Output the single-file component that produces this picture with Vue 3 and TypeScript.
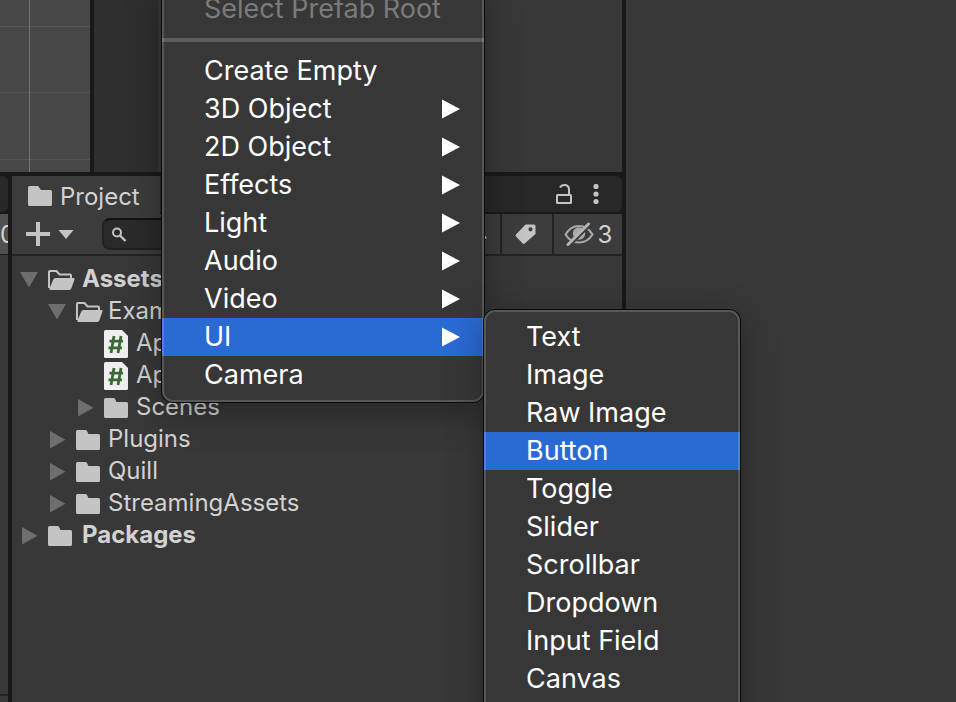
<script setup lang="ts">
import { ref } from 'vue'

interface MenuEntry {
  label: string
  submenu?: boolean
}

interface TreeNode {
  label: string
  level: number
  icon: 'open' | 'folder' | 'script'
  arrow: 'down' | 'right' | 'none'
  bold?: boolean
}

const menuEntries: MenuEntry[] = [
  { label: 'Create Empty' },
  { label: '3D Object', submenu: true },
  { label: '2D Object', submenu: true },
  { label: 'Effects', submenu: true },
  { label: 'Light', submenu: true },
  { label: 'Audio', submenu: true },
  { label: 'Video', submenu: true },
  { label: 'UI', submenu: true },
  { label: 'Camera' },
]

const uiEntries: string[] = [
  'Text', 'Image', 'Raw Image', 'Button', 'Toggle', 'Slider',
  'Scrollbar', 'Dropdown', 'Input Field', 'Canvas',
]

const tree: TreeNode[] = [
  { label: 'Assets', level: 0, icon: 'open', arrow: 'down', bold: true },
  { label: 'Exam', level: 1, icon: 'open', arrow: 'down' },
  { label: 'Ap', level: 2, icon: 'script', arrow: 'none' },
  { label: 'Ap', level: 2, icon: 'script', arrow: 'none' },
  { label: 'Scenes', level: 2, icon: 'folder', arrow: 'right' },
  { label: 'Plugins', level: 1, icon: 'folder', arrow: 'right' },
  { label: 'Quill', level: 1, icon: 'folder', arrow: 'right' },
  { label: 'StreamingAssets', level: 1, icon: 'folder', arrow: 'right' },
  { label: 'Packages', level: 0, icon: 'folder', arrow: 'right', bold: true },
]

const activeEntry = ref('UI')
const activeUiEntry = ref('Button')
const query = ref('')
</script>

<template>
  <div class="editor">
    <div class="workspace">
      <div class="upper">
        <section class="scene" aria-label="Scene">
          <svg class="grid-lines" width="90" height="172" aria-hidden="true">
            <path d="M0 26.500H90M0 92.500H90M0 159.500H90" stroke="#565656" />
            <path d="M29.500 0V172" stroke="#757575" />
          </svg>
        </section>
        <section class="hierarchy" aria-label="Hierarchy">
          <div class="gutter"></div>
          <div class="hierarchy-body"></div>
        </section>
      </div>
      <div class="lower">
        <section class="side" aria-label="Console">
          <div class="side-tabs"></div>
          <div class="side-tools"><span>0</span></div>
          <div class="side-body"></div>
          <div class="side-foot"></div>
        </section>
        <section class="project" aria-label="Project">
          <header class="tabs">
            <button class="tab" type="button">
              <svg width="24" height="20" viewBox="0 0 24 20" aria-hidden="true">
                <path d="M1.500 0H10L13 4H22.500Q24 4 24 5.500V18.500Q24 20 22.500 20H1.500Q0 20 0 18.500V1.500Q0 0 1.500 0Z" fill="#c4c4c4" />
              </svg>
              Project
            </button>
            <div class="tab-rest">
              <button class="icon-button" type="button" aria-label="Lock">
                <svg width="16" height="20" viewBox="0 0 16 20" fill="none" stroke="#c4c4c4" stroke-width="2" aria-hidden="true">
                  <rect x="1" y="11" width="14" height="8" rx="0.500" />
                  <path d="M4 3.500C5 1.600 6.500 1 8.500 1C11.300 1 13 2.800 13 5.500V11" />
                </svg>
              </button>
              <button class="icon-button" type="button" aria-label="More">
                <svg width="6" height="20" viewBox="0 0 6 20" fill="#c4c4c4" aria-hidden="true">
                  <circle cx="3" cy="2.500" r="2.600" /><circle cx="3" cy="10" r="2.600" /><circle cx="3" cy="17.500" r="2.600" />
                </svg>
              </button>
            </div>
          </header>
          <div class="toolbar">
            <button class="add" type="button" aria-label="Add">
              <svg width="48" height="24" viewBox="0 0 48 24" fill="#c4c4c4" aria-hidden="true">
                <path d="M10 0H14V10H24V14H14V24H10V14H0V10H10Z" />
                <path d="M32.500 8H47.500L40 17Z" />
              </svg>
            </button>
            <label class="search">
              <svg width="16" height="16" viewBox="0 0 16 16" fill="none" stroke="#c4c4c4" stroke-width="2" aria-hidden="true">
                <circle cx="5" cy="5.500" r="4" /><path d="M8 8.500L13.500 14" stroke-width="2.400" />
              </svg>
              <input v-model="query" type="text" aria-label="Search">
            </label>
            <button class="tool type" type="button" aria-label="Search by type">
              <svg width="22" height="20" viewBox="0 0 22 20" fill="#c4c4c4" aria-hidden="true">
                <circle cx="5" cy="14" r="4" /><rect x="6" y="0" width="8" height="7" /><path d="M17 7L22 14.500H12Z" />
              </svg>
            </button>
            <button class="tool tag" type="button" aria-label="Search by label">
              <svg width="21" height="21" viewBox="0 0 21 21" aria-hidden="true">
                <path fill="#c4c4c4" fill-rule="evenodd" d="M10.500 0.500H19Q20.500 0.500 20.500 2V10L9.700 19.600Q8.700 20.500 7.700 19.500L1 12.500Q0 11.500 1 10.500ZM15.500 3.200A2.100 2.100 0 1 0 15.500 7.400A2.100 2.100 0 1 0 15.500 3.200Z" />
              </svg>
            </button>
            <button class="tool hidden" type="button">
              <svg width="30" height="24" viewBox="0 0 30 24" fill="none" aria-hidden="true">
                <path d="M1.500 12.500C5 6.500 9.500 4 15 4S25 6.500 28.500 12.500C25 18 20.500 20.500 15 20.500S5 18 1.500 12.500Z" stroke="#a8a8a8" stroke-width="2.200" />
                <circle cx="15" cy="11.500" r="6.200" fill="#a8a8a8" />
                <path d="M5.500 23.500L26.500 2.500" stroke="#3c3c3c" stroke-width="3" />
                <path d="M4 22.500L24.500 2" stroke="#b4b4b4" stroke-width="3" stroke-linecap="round" />
              </svg>
              3
            </button>
          </div>
          <ul class="tree">
            <li v-for="(node, i) in tree" :key="i">
              <button class="node" :class="['level-' + node.level, { bold: node.bold }]" type="button">
                <svg class="arrow" width="18" height="18" viewBox="0 0 18 18" fill="#6e6e6e" aria-hidden="true">
                  <path v-if="node.arrow === 'down'" d="M0 1H18L9 16.500Z" />
                  <path v-else-if="node.arrow === 'right'" d="M2 0V17.500L17.500 8.700Z" />
                </svg>
                <span class="glyph">
                  <svg v-if="node.icon === 'open'" width="27" height="20" viewBox="0 0 27 20" aria-hidden="true">
                    <path d="M1 18V1.700Q1 1 1.700 1H8.500L11.500 4.500H22Q23 4.500 23 5.500V8" fill="none" stroke="#c4c4c4" stroke-width="2" />
                    <path d="M7.500 8H25.500Q27 8 26.500 9.500L23.500 18Q23 20 21 20H2Q1 20 1.500 18.500L5 10Q5.800 8 7.500 8Z" fill="#c4c4c4" />
                  </svg>
                  <svg v-else-if="node.icon === 'folder'" width="24" height="20" viewBox="0 0 24 20" aria-hidden="true">
                    <path d="M1.500 0H9.500Q10.500 0 11 1L12.500 4H22.500Q24 4 24 5.500V18.500Q24 20 22.500 20H1.500Q0 20 0 18.500V1.500Q0 0 1.500 0Z" fill="#c4c4c4" />
                  </svg>
                  <svg v-else width="24" height="28" viewBox="0 0 24 28" aria-hidden="true">
                    <path d="M1.500 0H18L24 6V26.500Q24 28 22.500 28H1.500Q0 28 0 26.500V1.500Q0 0 1.500 0Z" fill="#efefef" />
                    <path d="M10 6L7 23M17 6L14 23M5.500 11.200H19M4.500 17.800H18" stroke="#3a6b35" stroke-width="2.800" fill="none" />
                  </svg>
                </span>
                {{ node.label }}
              </button>
            </li>
          </ul>
        </section>
      </div>
    </div>
    <aside class="inspector"></aside>

    <div class="menu context-menu" role="menu" aria-label="GameObject">
      <button class="item" type="button" role="menuitem" disabled>Select Prefab Root</button>
      <hr>
      <button
        v-for="entry in menuEntries"
        :key="entry.label"
        class="item"
        :class="{ active: entry.label === activeEntry }"
        type="button"
        role="menuitem"
        @click="activeEntry = entry.label"
      >
        {{ entry.label }}
        <svg v-if="entry.submenu" width="18" height="20" viewBox="0 0 18 20" aria-hidden="true">
          <path d="M0 0.500V19.500L18 10Z" fill="#fff" />
        </svg>
      </button>
    </div>

    <div class="menu ui-menu" role="menu" aria-label="UI">
      <button
        v-for="label in uiEntries"
        :key="label"
        class="item"
        :class="{ active: label === activeUiEntry }"
        type="button"
        role="menuitem"
        @click="activeUiEntry = label"
      >
        {{ label }}
      </button>
    </div>
  </div>
</template>

<style>
body {
  margin: 0;
  background: #191919;
}
</style>

<style scoped>
.editor {
  position: relative;
  display: grid;
  grid-template-columns: 622fr 330fr;
  gap: 4px;
  height: 100vh;
  overflow: hidden;
  background: #191919;
  color: #d2d2d2;
  font-family: Inter, "Liberation Sans", sans-serif;
  font-size: 24px;
}

button {
  margin: 0;
  padding: 0;
  border: 0;
  background: none;
  color: inherit;
  font: inherit;
  text-align: left;
  white-space: nowrap;
}

svg {
  display: block;
  flex: none;
}

.workspace {
  display: grid;
  grid-template-rows: 172px 1fr;
  gap: 4px;
  min-width: 0;
}

.inspector {
  background: #383838;
}

.upper {
  display: grid;
  grid-template-columns: 90px 1fr;
  gap: 4px;
}

.scene {
  background: #474747;
}

.hierarchy {
  display: flex;
}

.gutter {
  width: 64px;
  background: #2f2f2f;
}

.hierarchy-body {
  flex: 1;
  background: #383838;
}

.lower {
  display: grid;
  grid-template-columns: 8px 1fr;
  gap: 4px;
  min-height: 0;
}

.side {
  display: flex;
  flex-direction: column;
  overflow: hidden;
}

.side-tabs {
  height: 36px;
  margin-bottom: 2px;
  border-radius: 0 6px 6px 0;
  background: #282828;
}

.side-tools {
  display: flex;
  align-items: center;
  height: 40px;
  background: #505050;
}

.side-body {
  flex: 1;
  margin-top: 1px;
  background: #383838;
}

.side-foot {
  height: 6px;
  border-top: 2px solid #232323;
  background: #383838;
}

.project {
  display: flex;
  flex-direction: column;
  min-width: 0;
  background: #383838;
}

.tabs {
  display: flex;
  height: 38px;
  background: #191919;
}

.tab {
  display: flex;
  align-items: center;
  gap: 8px;
  padding: 2px 20px 0 16px;
  background: #3c3c3c;
}

.tab-rest {
  display: flex;
  flex: 1;
  align-items: center;
  justify-content: flex-end;
  gap: 21px;
  height: 36px;
  padding-right: 23px;
  border-radius: 0 6px 6px 0;
  background: #282828;
}

.toolbar {
  display: flex;
  align-items: center;
  height: 40px;
  border-bottom: 2px solid #232323;
  background: #3c3c3c;
}

.add {
  padding: 0 28px 0 14px;
}

.search {
  display: flex;
  flex: 1;
  align-items: center;
  gap: 8px;
  box-sizing: border-box;
  height: 32px;
  min-width: 0;
  padding: 2px 8px 0;
  border: 2px solid #212121;
  border-top-color: #111;
  border-radius: 8px;
  background: #2a2a2a;
}

.search input {
  flex: 1;
  min-width: 0;
  border: 0;
  outline: 0;
  background: none;
  color: inherit;
  font: inherit;
}

.tool {
  display: flex;
  align-items: center;
  justify-content: center;
  gap: 4px;
  box-sizing: border-box;
  height: 40px;
  border-left: 2px solid #232323;
}

.type {
  width: 50px;
  margin-left: 10px;
}

.tag {
  width: 52px;
  padding-right: 4px;
}

.hidden {
  width: 70px;
}

.tree {
  margin: 0;
  padding: 7px 0 0;
  list-style: none;
}

.node {
  display: flex;
  align-items: center;
  box-sizing: border-box;
  width: 100%;
  height: 32px;
  padding-bottom: 2px;
}

.arrow {
  margin-top: 4px;
  margin-right: 10px;
}

.level-0 {
  padding-left: 8px;
}

.level-1 {
  padding-left: 36px;
}

.level-2 {
  padding-left: 64px;
}

.glyph {
  width: 32px;
  padding-top: 4px;
}

.bold {
  font-weight: 700;
}

.bold .glyph {
  width: 34px;
}

.menu {
  position: absolute;
  display: flex;
  flex-direction: column;
  box-sizing: border-box;
  padding: 8px 0;
  border-radius: 11px;
  background: #373737;
  box-shadow: 0 0 0 1px #0c0c0c, 0 10px 36px rgba(0, 0, 0, 0.36);
  color: #fff;
  font-size: 27px;
}

.menu::after {
  position: absolute;
  inset: 0;
  border: 2px solid rgba(255, 255, 255, 0.16);
  border-radius: 11px;
  content: "";
  pointer-events: none;
}

.context-menu {
  top: -18px;
  left: 162px;
  width: 322px;
}

.ui-menu {
  top: 310px;
  bottom: -24px;
  left: 484px;
  width: 256px;
}

.item {
  display: flex;
  flex: none;
  align-items: center;
  justify-content: space-between;
  height: 38px;
  padding: 0 24px 0 42px;
  line-height: 36px;
}

.item:disabled {
  color: #7b7b7b;
}

.active {
  background: #2a6ad3;
}

.menu hr {
  width: 100%;
  height: 4px;
  margin: 10px 0;
  border: 0;
  background: #5c5c5c;
}
</style>
